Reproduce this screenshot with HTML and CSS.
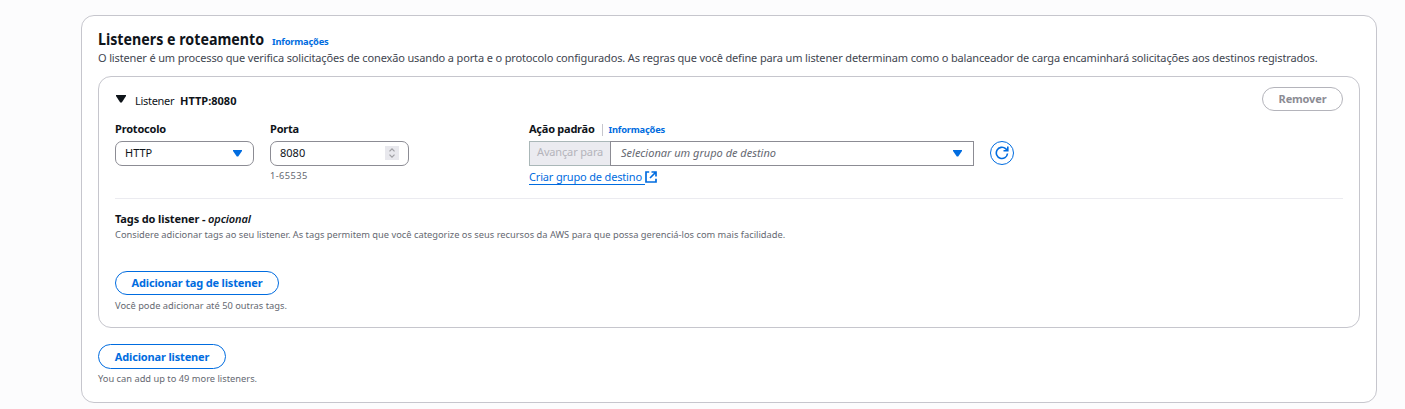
FILE: index.html
```html
<!DOCTYPE html>
<html lang="pt-BR">
<head>
<meta charset="utf-8">
<title>Listeners e roteamento</title>
<link rel="stylesheet" href="styles.css">
</head>
<body>
<main class="panel">
  <header class="panel-head">
    <h1 class="title"><span class="t-title">Listeners e roteamento</span></h1>
    <a class="info info-head">Informações</a>
  </header>
  <p class="description">O listener é um processo que verifica solicitações de conexão usando a porta e o protocolo configurados. As regras que você define para um listener determinam como o balanceador de carga encaminhará solicitações aos destinos registrados.</p>

  <section class="card">
    <div class="card-head">
      <svg class="toggle" width="10" height="8" viewBox="0 0 10 8"><path d="M0 0h10v1L5.8 7.6H4.2L0 1z" fill="#0f141a"/></svg>
      <span class="card-label">Listener</span>
      <b class="card-value">HTTP:8080</b>
      <button class="btn btn-disabled">Remover</button>
    </div>

    <div class="fields">
      <div class="field field-protocol">
        <label class="label">Protocolo</label>
        <div class="control">
          <span>HTTP</span>
          <svg class="caret" width="9" height="7" viewBox="0 0 9 7"><path d="M0 0h9v1L5.200 6.600H3.800L0 1z" fill="#006ce0"/></svg>
        </div>
      </div>
      <div class="field field-port">
        <label class="label">Porta</label>
        <div class="control control-port">
          <span>8080</span>
          <span class="spinner"><svg width="14" height="14" viewBox="0 0 14 14" fill="none" stroke="#a0a0a4" stroke-width="1.2"><path d="M4.500 5.300 7 2.800l2.500 2.500M4.500 8.700 7 11.200l2.500-2.500"/></svg></span>
        </div>
        <span class="hint range">1-65535</span>
      </div>
      <div class="field field-action">
        <div class="label-row">
          <label class="label label-action">Ação padrão</label>
          <a class="info info-divided">Informações</a>
        </div>
        <div class="combo">
          <span class="combo-prefix">Avançar para</span>
          <div class="combo-select">
            <i class="placeholder">Selecionar um grupo de destino</i>
            <svg class="caret" width="9" height="7" viewBox="0 0 9 7"><path d="M0 0h9v1L5.200 6.600H3.800L0 1z" fill="#006ce0"/></svg>
          </div>
        </div>
        <a class="create-link"><span class="create-text">Criar grupo de destino</span><svg width="12" height="12" viewBox="0 0 12 12" fill="none" stroke="#006ce0" stroke-width="1.700"><path d="M4.200 1H1v10h10V7.800M6.500 1H11v4.500M11 1 5 7"/></svg></a>
      </div>
      <button class="refresh" aria-label="Atualizar"><svg width="14" height="14" viewBox="0 0 14 14" fill="none" stroke="#006ce0" stroke-width="1.600"><path d="M12.500 7.500A5.600 5.600 0 1 1 10.600 2.700L12.500 4.500M12.800.5v4.300H8.500"/></svg></button>
    </div>

    <div class="tags">
      <h2 class="subtitle">Tags do listener - <i>opcional</i></h2>
      <p class="hint tags-text">Considere adicionar tags ao seu listener. As tags permitem que você categorize os seus recursos da AWS para que possa gerenciá-los com mais facilidade.</p>
      <button class="btn btn-tag">Adicionar tag de listener</button>
      <p class="hint after-tag">Você pode adicionar até 50 outras tags.</p>
    </div>
  </section>

  <button class="btn btn-listener">Adicionar listener</button>
  <p class="hint after-listener">You can add up to 49 more listeners.</p>
</main>
</body>
</html>
```
FILE: styles.css
```css
* { box-sizing: border-box; }
body {
  margin: 0;
  padding: 15px 28px 0 81px;
  height: 409px;
  overflow: hidden;
  background: #fcfcfd;
  color: #0f141a;
  font: 11px/16px "Noto Sans", sans-serif;
}
h1, h2, p { margin: 0; }
button { font: inherit; cursor: pointer; }
p, span, a, label, b, i { white-space: nowrap; }

.panel {
  display: flex;
  flex-direction: column;
  align-items: flex-start;
  height: 388px;
  padding: 13px 16px 0;
  background: #fff;
  border: 1px solid #c6c6cd;
  border-radius: 13px;
}
.panel-head { display: flex; height: 21px; }
.title { width: 174px; font-size: 16px; line-height: 21px; font-weight: 700; }
.t-title { display: inline-block; transform: scaleX(.89); transform-origin: left; }
.info { color: #006ce0; font-size: 9.300px; font-weight: 700; letter-spacing: -.2px; }
.info-head { margin-top: 5px; line-height: 16px; }
.description { height: 26px; color: #424650; letter-spacing: -.141px; }

.card {
  width: 1262px;
  height: 252px;
  padding: 10px 16px 0;
  border: 1px solid #c6c6cd;
  border-radius: 13px;
}
.card-head { display: flex; height: 34px; }
.toggle { margin: 8px 9px 0 1px; }
.card-label { margin-top: 6px; width: 45px; letter-spacing: -.3px; }
.card-value { margin-top: 6px; }
.btn {
  display: flex;
  align-items: center;
  justify-content: center;
  height: 25px;
  padding: 0;
  border: 1px solid #006ce0;
  border-radius: 13px;
  background: #fff;
  color: #006ce0;
  font-weight: 700;
  letter-spacing: -.16px;
}
.btn-disabled { width: 81px; height: 24px; margin-left: auto; border-color: #b4b4bb; color: #8c8c94; }

.fields { display: flex; height: 77px; }
.field { display: flex; flex-direction: column; }
.field-protocol { width: 139px; margin-right: 16px; }
.field-port { width: 139px; margin-right: 120px; }
.field-action { width: 445px; margin-right: 16px; }
.label { height: 20px; font-weight: 700; letter-spacing: -.2px; }
.label-action { letter-spacing: -.25px; }
.label-row { display: flex; height: 20px; }
.info-divided { height: 12px; margin: 3px 0 0 7px; padding-left: 6px; border-left: 1px solid #c6c6cd; line-height: 12px; }
.control {
  display: flex;
  align-items: center;
  justify-content: space-between;
  height: 25px;
  padding: 0 11px 1px 9px;
  border: 1px solid #8c8c94;
  border-radius: 7px;
}
.control-port { padding: 0 9px 1px; }
.spinner { display: flex; width: 14px; height: 14px; background: #e8e8ed; }
.hint { color: #656871; font-size: 9.300px; line-height: 14px; }
.range { margin-top: 3px; letter-spacing: .4px; }
.combo { display: flex; height: 25px; }
.combo-prefix { width: 81px; padding: 2px 0 0 7px; border: 1px solid #aab7b8; border-right: 0; background: #ebebf0; color: #b4b4bb; letter-spacing: -.15px; }
.combo-select {
  display: flex;
  flex: 1;
  align-items: center;
  justify-content: space-between;
  padding: 0 11px 1px 10px;
  border: 1px solid #8c8c94;
}
.placeholder { color: #656871; }
.create-link { display: flex; align-items: center; height: 16px; margin-top: 3px; color: #006ce0; }
.create-text { width: 116px; height: 16px; border-bottom: 1px solid #006ce0; line-height: 15px; letter-spacing: -.17px; }
.refresh {
  display: flex;
  align-items: center;
  justify-content: center;
  width: 24px;
  height: 24px;
  margin-top: 20px;
  padding: 0;
  border: 1px solid #006ce0;
  border-radius: 50%;
  background: #fff;
}

.tags { padding-top: 12px; border-top: 1px solid #ebebf0; }
.subtitle { height: 17px; font-size: 11px; line-height: 16px; letter-spacing: -.12px; }
.subtitle i { font-weight: 600; }
.tags-text { height: 43px; }
.btn-tag { width: 164px; height: 24px; }
.btn-listener { width: 128px; margin-top: 16px; }
.after-tag { margin-top: 4px; }
.after-listener { margin-top: 3px; }
```
